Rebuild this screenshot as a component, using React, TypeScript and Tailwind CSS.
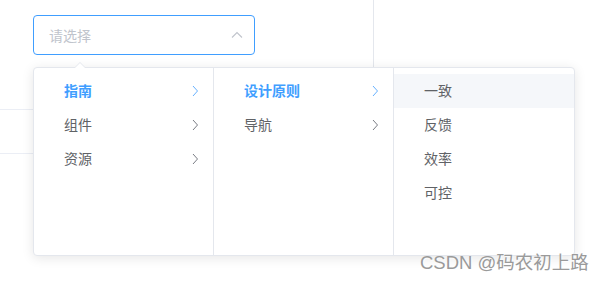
const menus = [
  { items: ["指南", "组件", "资源"], active: 0, arrow: true },
  { items: ["设计原则", "导航"], active: 0, arrow: true },
  { items: ["一致", "反馈", "效率", "可控"], active: -1, hover: 0, arrow: false },
];

function Chevron({ active }: { active: boolean }) {
  return (
    <svg width="14" height="14" viewBox="0 0 14 14" className="ml-auto mr-[12px]">
      <path
        d="M6 2 L10.5 7 L6 12"
        fill="none"
        stroke={active ? "#66b1ff" : "#7a7d85"}
        strokeWidth="1"
      />
    </svg>
  );
}

export default function App() {
  return (
    <div
      className="relative w-[607px] h-[281px] bg-white overflow-hidden"
      style={{ fontFamily: '"Noto Sans CJK SC", "Noto Sans", sans-serif' }}
    >
      <div className="w-[374px] border-r border-[#e4e7ed]">
        <div className="h-[110px] border-b border-[#ebeef5] pt-[15px] pl-[33px]">
          <div className="w-[222px] h-[40px] rounded-[4px] border border-[#409eff] flex items-center pl-[15px] pr-[10px]">
            <span className="text-[14px] text-[#c0c4cc]">请选择</span>
            <svg width="14" height="14" viewBox="0 0 14 14" className="ml-auto">
              <path d="M2 9.5 L7 4.5 L12 9.5" fill="none" stroke="#c0c4cc" strokeWidth="1.1" />
            </svg>
          </div>
        </div>
        <div className="h-[44px] border-b border-[#ebeef5]" />
      </div>

      <div className="absolute left-[33px] top-[67px] flex h-[189px] bg-white border border-[#e4e7ed] rounded-[4px] shadow-[0_2px_12px_0_rgba(0,0,0,0.1)]">
        <div className="absolute left-[40px] -top-[6px] w-0 h-0 border-x-[6px] border-x-transparent border-b-[6px] border-b-[#e4e7ed]" />
        <div className="absolute left-[41px] -top-[5px] w-0 h-0 border-x-[5px] border-x-transparent border-b-[5px] border-b-white" />
        {menus.map((m, i) => (
          <ul
            key={i}
            className={`py-[6px] w-[180px] ${i < 2 ? "border-r border-[#e4e7ed]" : ""}`}
          >
            {m.items.map((t, j) => {
              const active = j === m.active;
              const hover = m.hover === j;
              return (
                <li
                  key={t}
                  className={`h-[34px] flex items-center pl-[30px] text-[14px] ${
                    active ? "text-[#409eff] font-bold" : "text-[#606266]"
                  } ${hover ? "bg-[#f5f7fa]" : ""}`}
                >
                  <span className="-mt-[1px]">{t}</span>
                  {m.arrow && <Chevron active={active} />}
                </li>
              );
            })}
          </ul>
        ))}
      </div>

      <div
        className="absolute left-[420px] top-[249px] text-[18.5px] text-[#9a9a9a]"
        style={{
          fontFamily: '"Liberation Sans", "Noto Sans CJK SC", sans-serif',
          textShadow: "1px 1px 1px rgba(255,255,255,0.8)",
        }}
      >
        CSDN @码农初上路
      </div>
    </div>
  );
}
